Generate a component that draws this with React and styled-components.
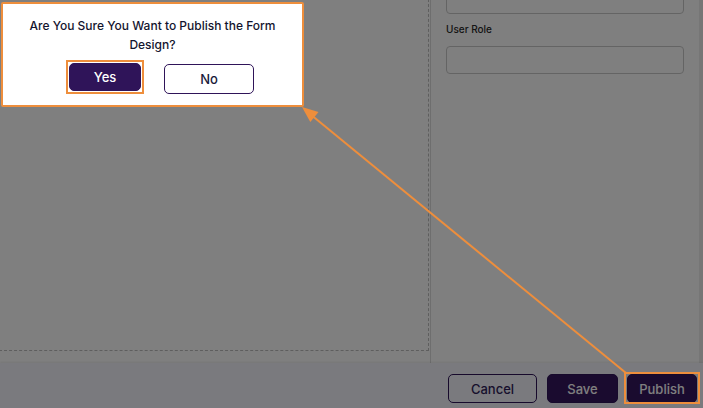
import React from "react";
import styled, { createGlobalStyle } from "styled-components";

const GlobalStyle = createGlobalStyle`
  html, body { margin: 0; padding: 0; }
  body { font-family: Inter, "Liberation Sans", Arial, sans-serif; background: #fff; }
  * { box-sizing: border-box; }
`;

const Page = styled.div`
  position: relative;
  width: 703px;
  height: 408px;
  overflow: hidden;
  display: flex;
  flex-direction: column;
`;

const Main = styled.div`
  height: 363px;
  display: flex;
  background: #ffffff;
`;

const Canvas = styled.div`
  width: 430px;
  padding-bottom: 12px;
`;

const CanvasFrame = styled.div`
  width: 430px;
  height: 352px;
  margin: -1px 0 0 -1px;
  border: 1px dashed #bdbdbd;
`;

const Divider = styled.div`
  width: 1px;
  background: #dcdcdc;
`;

const Panel = styled.div`
  width: 268px;
  padding: 0 15px;
  display: flex;
  flex-direction: column;
`;

const Field = styled.div`
  height: ${(p) => p.h}px;
  border: 1px solid #c9c9c9;
  border-radius: 4px;
  background: #fff;
  margin-top: ${(p) => p.mt || 0}px;
`;

const Label = styled.div`
  margin-top: 8px;
  font-size: 10px;
  font-weight: 500;
  color: #2a2a2a;
  line-height: 14px;
`;

const Scrollbar = styled.div`
  flex: 1;
  background: #ececec;
`;

const Footer = styled.div`
  height: 45px;
  background: #f4f4fc;
  box-shadow: 0 -1px 2px rgba(0, 0, 0, 0.08);
  display: flex;
  justify-content: flex-end;
  align-items: flex-start;
  gap: 10px;
  padding: 11px 6px 0 0;
`;

const FooterButton = styled.button`
  height: 29px;
  width: ${(p) => p.w}px;
  margin-left: ${(p) => p.ml || 0}px;
  border-radius: 5px;
  font-family: inherit;
  font-size: 13px;
  font-weight: 500;
  border: 1px solid #2f1459;
  background: ${(p) => (p.primary ? "#35165f" : "transparent")};
  color: ${(p) => (p.primary ? "#ffffff" : "#2f1e5a")};
  padding: 0;
`;

const Overlay = styled.div`
  position: absolute;
  inset: 0;
  background: rgba(0, 0, 0, 0.5);
`;

const Modal = styled.div`
  position: absolute;
  left: 1px;
  top: 2px;
  width: 303px;
  height: 105px;
  background: #fff;
  border: 2px solid #ee8e3c;
  border-radius: 2px;
  display: flex;
  flex-direction: column;
  align-items: center;
`;

const Title = styled.div`
  margin-top: 12px;
  width: 250px;
  text-align: center;
  font-size: 12px;
  font-weight: 500;
  line-height: 19px;
  color: #14142e;
`;

const ButtonRow = styled.div`
  align-self: stretch;
  display: flex;
  align-items: flex-end;
  gap: 20px;
  padding-left: 63px;
  margin-top: 6px;
`;

const Highlight = styled.div`
  border: 2px solid #ee8e3c;
  padding: 1px;
`;

const DialogButton = styled.button`
  width: ${(p) => p.w}px;
  height: ${(p) => p.h}px;
  border-radius: 5px;
  font-family: inherit;
  font-size: 13px;
  font-weight: 500;
  padding: 0;
  border: 1px solid #2f1459;
  background: ${(p) => (p.primary ? "#2f1459" : "#ffffff")};
  color: ${(p) => (p.primary ? "#ffffff" : "#1b1b3b")};
`;

const PublishMark = styled.div`
  position: absolute;
  left: 624px;
  top: 372px;
  width: 76px;
  height: 32px;
  border: 2px solid #ee8e3c;
`;

const Arrow = styled.svg`
  position: absolute;
  inset: 0;
  pointer-events: none;
`;

export default function App() {
  return (
    <>
      <GlobalStyle />
      <Page>
        <Main>
          <Canvas>
            <CanvasFrame />
          </Canvas>
          <Divider />
          <Panel>
            <Field h={34} mt={-20} />
            <Label>User Role</Label>
            <Field h={28} mt={10} />
          </Panel>
          <Scrollbar />
        </Main>
        <Footer>
          <FooterButton w={89}>Cancel</FooterButton>
          <FooterButton w={71} primary>Save</FooterButton>
          <FooterButton w={70} ml={-1} primary>Publish</FooterButton>
        </Footer>
        <Overlay />
        <Modal>
          <Title>Are You Sure You Want to Publish the Form Design?</Title>
          <ButtonRow>
            <Highlight>
              <DialogButton primary w={72} h={28}>Yes</DialogButton>
            </Highlight>
            <DialogButton w={90} h={30}>No</DialogButton>
          </ButtonRow>
        </Modal>
        <PublishMark />
        <Arrow width="703" height="408" viewBox="0 0 703 408">
          <line x1="626" y1="373" x2="310" y2="114" stroke="#ee8e3c" strokeWidth="2" />
          <polygon points="302,107 318.5,112.1 310.3,122.1" fill="#ee8e3c" />
        </Arrow>
      </Page>
    </>
  );
}
